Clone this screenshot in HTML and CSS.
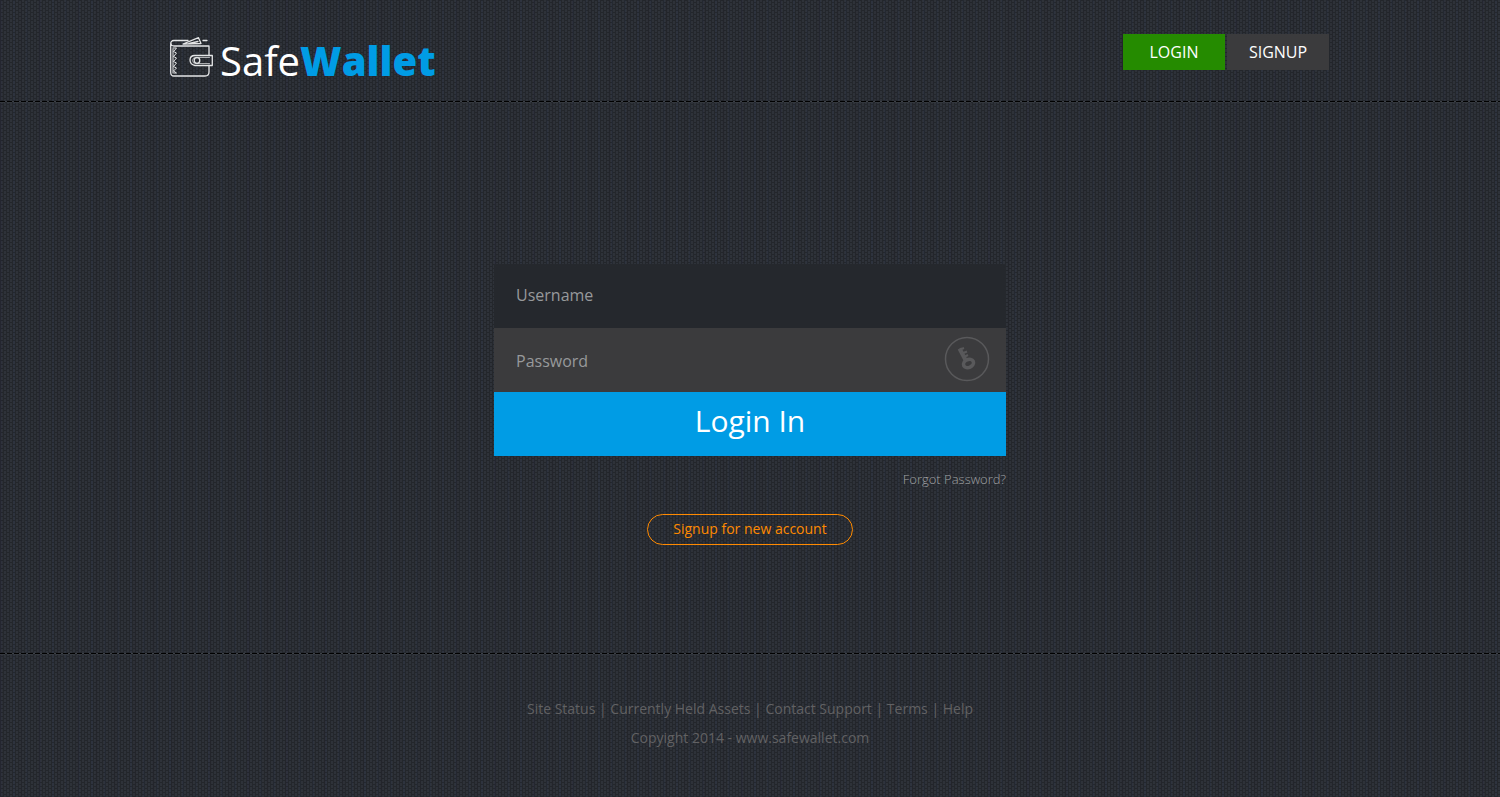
FILE: index.html
```html
<!DOCTYPE html>
<html lang="en">
<head>
    <meta charset="UTF-8">
    <meta name="viewport" content="width=device-width, initial-scale=1.0">
    <title>SafeWallet</title>
    <link rel="stylesheet" href="styles.css">
</head>
<body>
    <header class="header">
        <div class="container">
            <a href="#" class="logo">
                <svg class="logo-icon" width="43" height="40" viewBox="0 0 43 40" fill="none" stroke="#e4e5e6" stroke-width="1.3" stroke-linejoin="round" stroke-linecap="round">
                    <path d="M18 3.5H4Q.7 3.5.7 7V35.500Q.7 39 4 39H35Q39 39 39 35V28.5M39 18V9H4Q1 9 1 6.500"/>
                    <path d="M13 7 28.500.7 31 6.500 13 7ZM19 6.500 28 4.500M33 3.500H37"/>
                    <path d="M42.300 18.500H25Q20 18.500 20 23T25 28.500H42.300Z"/>
                    <path d="M39.500 20.500H26Q22.500 20.500 22.500 23.500T26 26.500H39.500" stroke-width=".7"/>
                    <circle cx="27" cy="23.500" r="2.800" fill="#2a2d34"/>
                    <path d="M3 11H6.500L3.500 14.500L6.500 16L3.500 19.500L6.500 21L3.500 24.500L6.500 26L3.500 29.500L6.500 31L3.500 34L6.500 36H4M3 12V36" stroke-width="1"/>
                </svg>
                <span class="logo-text">Safe<strong>Wallet</strong></span>
            </a>
            <nav class="nav">
                <a href="#" class="nav-link active">LOGIN</a>
                <a href="#" class="nav-link">SIGNUP</a>
            </nav>
        </div>
    </header>

    <main class="main">
        <form class="login-form">
            <input type="text" class="field" id="username" name="username" placeholder="Username" aria-label="Username">
            <div class="password-row">
                <input type="password" class="field" id="password" name="password" placeholder="Password" aria-label="Password">
                <svg class="key-icon" width="46" height="46" viewBox="0 0 46 46" fill="none" stroke="#59595b">
                    <circle cx="23" cy="23" r="21.500" stroke-width="1.500"/>
                    <path d="M15.500 12.500 22 25" stroke-width="4"/>
                    <path d="M16 13.500 20 12M18 17.500 23 15.500M20 21 24 19" stroke-width="2"/>
                    <ellipse cx="24.500" cy="27.500" rx="5.200" ry="3.900" stroke-width="3.600" transform="rotate(-25 24.500 27.500)"/>
                </svg>
            </div>
            <button type="submit" class="login-button">Login In</button>
            <a href="#" class="forgot">Forgot Password?</a>
        </form>
        <a href="#" class="signup">Signup for new account</a>
    </main>

    <footer class="footer">
        <p><a href="#">Site Status</a> | <a href="#">Currently Held Assets</a> | <a href="#">Contact Support</a> | <a href="#">Terms</a> | <a href="#">Help</a></p>
        <p>Copyight 2014 - www.safewallet.com</p>
    </footer>
</body>
</html>
```

FILE: styles.css
```css
* {
    box-sizing: border-box;
}
body {
    margin: 0;
    min-height: 100vh;
    display: flex;
    flex-direction: column;
    font-family: "Open Sans", sans-serif;
    font-size: 14px;
    color: #616163;
    /* woven cloth: ribs with staggered cross threads */
    background-color: #2e3239;
    background-image:
        linear-gradient(90deg, rgba(0, 0, 0, 0.22) 1px, transparent 1px),
        conic-gradient(from 270deg at 2px 1px, rgba(0, 0, 0, 0.24) 90deg, transparent 90deg),
        conic-gradient(from 270deg at 2px 1px, rgba(0, 0, 0, 0.24) 90deg, transparent 90deg),
        linear-gradient(90deg, rgba(50, 60, 100, 0.12) 2px, transparent 2px),
        linear-gradient(90deg, rgba(0, 0, 0, 0.03) 3px, transparent 3px);
    background-size: 3px 100%, 6px 4px, 6px 4px, 13px 100%, 19px 100%;
    background-position: 0 0, 1px 0, 4px 2px, 0 0, 0 0;
}
a {
    color: inherit;
    text-decoration: none;
}

/* stitched line */
.header::after,
.footer::before {
    content: "";
    display: block;
    height: 2px;
    background:
        repeating-linear-gradient(90deg, #000 0 5px, #3c4046 5px 7px) top / 100% 1px no-repeat,
        repeating-linear-gradient(90deg, #34383e 0 5px, transparent 5px 7px) bottom / 100% 1px no-repeat;
}

/* header */
.container {
    display: flex;
    justify-content: space-between;
    align-items: flex-start;
    max-width: 1200px;
    height: 101px;
    margin: 0 auto;
    padding: 34px 21px 0 20px;
}
.logo {
    display: flex;
    align-items: flex-start;
    gap: 7px;
    color: #fff;
}
.logo-icon {
    margin-top: 3px;
}
.logo-text {
    font-size: 40px;
    line-height: 54px;
}
.logo-text strong {
    font-weight: 800;
    color: #009ce5;
}
.nav {
    display: flex;
    gap: 2px;
}
.nav-link {
    width: 102px;
    background: #3b3b3d;
    color: #fff;
    font-size: 16px;
    line-height: 36px;
    text-align: center;
}
.nav-link.active {
    background: #258b00;
}

/* login */
.main {
    flex: 1;
    display: flex;
    flex-direction: column;
    align-items: center;
    padding: 161px 20px 80px;
}
.login-form {
    display: flex;
    flex-direction: column;
    width: 100%;
    max-width: 512px;
}
.field {
    display: block;
    width: 100%;
    height: 64px;
    padding: 0 22px 2px;
    border: 0;
    background: #25282d;
    color: #fff;
    font-family: inherit;
    font-size: 16px;
}
.field::placeholder {
    color: #97999b;
    opacity: 1;
}
.password-row {
    position: relative;
}
.password-row .field {
    padding: 2px 22px 0;
    background: #3b3b3d;
}
.key-icon {
    position: absolute;
    top: 8px;
    right: 16px;
}
.login-button {
    height: 64px;
    padding: 0 0 8px;
    border: 0;
    background: #009ce5;
    color: #fff;
    font-family: inherit;
    font-size: 30px;
    cursor: pointer;
}
.forgot {
    align-self: flex-end;
    margin-top: 13px;
    color: #a0a2a4;
    font-size: 13px;
    font-weight: 300;
    line-height: 20px;
}
.signup {
    margin-top: 25px;
    padding: 0 25px 2px;
    border: 1px solid #ff8a00;
    border-radius: 16px;
    color: #ff8a00;
    line-height: 27px;
}

/* footer */
.footer {
    height: 144px;
    text-align: center;
}
.footer p {
    margin: 0;
    line-height: 29px;
}
.footer::before {
    margin-bottom: 39px;
}
```
